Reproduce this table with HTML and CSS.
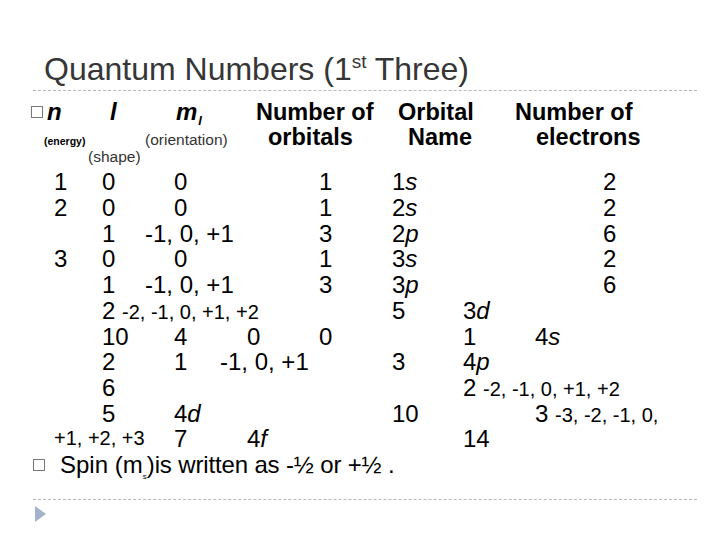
FILE: index.html
```html
<!DOCTYPE html>
<html>
<head>
<meta charset="utf-8">
<link rel="stylesheet" href="styles.css">
</head>
<body>
<div class="slide">
  <h1 class="title">Quantum Numbers (1<span class="sup">st</span> Three)</h1>
  <div class="rule"></div>

  <div class="hdr hdr1">
    <span class="bullet"></span>
    <span class="hv">n</span>
    <span class="hv">l</span>
    <span class="hv">m<span class="sub-l">l</span></span>
    <span>Number of</span>
    <span>Orbital</span>
    <span>Number of</span>
  </div>
  <div class="hdr hdr2">
    <span class="energy">(energy)</span>
    <span class="paren">(orientation)</span>
    <span>orbitals</span>
    <span>Name</span>
    <span>electrons</span>
  </div>
  <div class="hdr hdr3">
    <span class="paren">(shape)</span>
  </div>

  <div class="data">
    <div class="row"><span class="ca">1</span><span class="cb">0</span><span class="cd">0</span><span class="cg">1</span><span class="ch">1<i>s</i></span><span class="ck">2</span></div>
    <div class="row"><span class="ca">2</span><span class="cb">0</span><span class="cd">0</span><span class="cg">1</span><span class="ch">2<i>s</i></span><span class="ck">2</span></div>
    <div class="row"><span class="cb">1</span><span class="cc">-1, 0, +1</span><span class="cg">3</span><span class="ch">2<i>p</i></span><span class="ck">6</span></div>
    <div class="row"><span class="ca">3</span><span class="cb">0</span><span class="cd">0</span><span class="cg">1</span><span class="ch">3<i>s</i></span><span class="ck">2</span></div>
    <div class="row"><span class="cb">1</span><span class="cc">-1, 0, +1</span><span class="cg">3</span><span class="ch">3<i>p</i></span><span class="ck">6</span></div>
    <div class="row"><span class="cb">2 <span class="sm">-2, -1, 0, +1, +2</span></span><span class="ch">5</span><span class="ci">3<i>d</i></span></div>
    <div class="row"><span class="cb">10</span><span class="cd">4</span><span class="cf">0</span><span class="cg">0</span><span class="ci">1</span><span class="cj">4<i>s</i></span></div>
    <div class="row"><span class="cb">2</span><span class="cd">1</span><span class="ce">-1, 0, +1</span><span class="ch">3</span><span class="ci">4<i>p</i></span></div>
    <div class="row"><span class="cb">6</span><span class="ci">2 <span class="sm">-2, -1, 0, +1, +2</span></span></div>
    <div class="row"><span class="cb">5</span><span class="cd">4<i>d</i></span><span class="ch">10</span><span class="cj">3 <span class="sm">-3, -2, -1, 0,</span></span></div>
    <div class="row"><span class="ca sm">+1, +2, +3</span><span class="cd">7</span><span class="cf">4<i>f</i></span><span class="ci">14</span></div>
  </div>

  <div class="spin">
    <span class="bullet"></span>
    <span class="spin-text">Spin (m<span class="sub-s">s</span>)<span class="tight">is written as -½ or +½ .</span></span>
  </div>

  <div class="rule rule-bottom"></div>
  <div class="arrow"></div>
</div>
</body>
</html>
```

FILE: styles.css
```css
html, body {
  margin: 0;
  padding: 0;
  background: #ffffff;
}

.slide {
  width: 720px;
  height: 540px;
  overflow: hidden;
  font-family: "Liberation Sans", Arial, sans-serif;
  color: #000;
}

.title {
  margin: 0;
  padding: 51px 0 0 44px;
  height: 36px;
  line-height: 36px;
  font-size: 32px;
  font-weight: normal;
  color: #363636;
  white-space: nowrap;
}

.sup {
  font-size: 19px;
  line-height: 0;
  vertical-align: 12px;
}

.rule {
  margin: 3px 23px 0 33px;
  border-top: 1px dashed #b8b8b8;
}

.hdr {
  display: grid;
  align-items: baseline;
  white-space: nowrap;
  font-weight: bold;
}

.hdr1 {
  margin-top: 8px;
  height: 26px;
  line-height: 26px;
  font-size: 23.5px;
  padding-left: 31px;
  grid-template-columns: 16px 63px 66px 80px 142px 117px auto;
}

.hv {
  font-style: italic;
  font-size: 24px;
}

.sub-l {
  font-size: 13px;
  line-height: 0;
  vertical-align: -5px;
  margin-left: 1px;
}

.bullet {
  display: inline-block;
  box-sizing: border-box;
  width: 12px;
  height: 12px;
  border: 1px solid #7a7a7a;
  align-self: center;
}

.hdr2 {
  height: 23px;
  line-height: 25px;
  font-size: 23.5px;
  padding-left: 44px;
  grid-template-columns: 101px 123px 140px 128px auto;
}

.energy {
  font-size: 10.5px;
}

.paren {
  font-size: 15.5px;
  font-weight: normal;
  color: #333;
}

.hdr3 {
  height: 18px;
  line-height: 18px;
  padding-left: 88px;
  grid-template-columns: auto;
}

.data {
  margin-top: 3.4px;
  font-size: 24px;
}

.row {
  display: grid;
  grid-template-columns: 48px 43px 29px 46px 27px 72px 73px 71px 72px 68px 60px;
  padding-left: 54px;
  height: 25.7px;
  line-height: 25.7px;
  white-space: nowrap;
}

.row > span {
  grid-row: 1;
}

.ca { grid-column: 1; }
.cb { grid-column: 2; }
.cc { grid-column: 3; }
.cd { grid-column: 4; }
.ce { grid-column: 5; }
.cf { grid-column: 6; }
.cg { grid-column: 7; }
.ch { grid-column: 8; }
.ci { grid-column: 9; }
.cj { grid-column: 10; }
.ck { grid-column: 11; }

.sm {
  font-size: 20px;
}

.spin {
  display: flex;
  align-items: center;
  height: 26px;
  line-height: 26px;
  padding-left: 33px;
  gap: 15px;
  font-size: 24px;
  white-space: nowrap;
}

.sub-s {
  font-size: 8px;
  line-height: 0;
  vertical-align: -6px;
}

.tight {
  letter-spacing: -0.15px;
}

.rule-bottom {
  margin-top: 21px;
}

.arrow {
  margin: 6px 0 0 35px;
  width: 0;
  height: 0;
  border-left: 11px solid #a3b3cc;
  border-top: 8px solid transparent;
  border-bottom: 8px solid transparent;
}
```
